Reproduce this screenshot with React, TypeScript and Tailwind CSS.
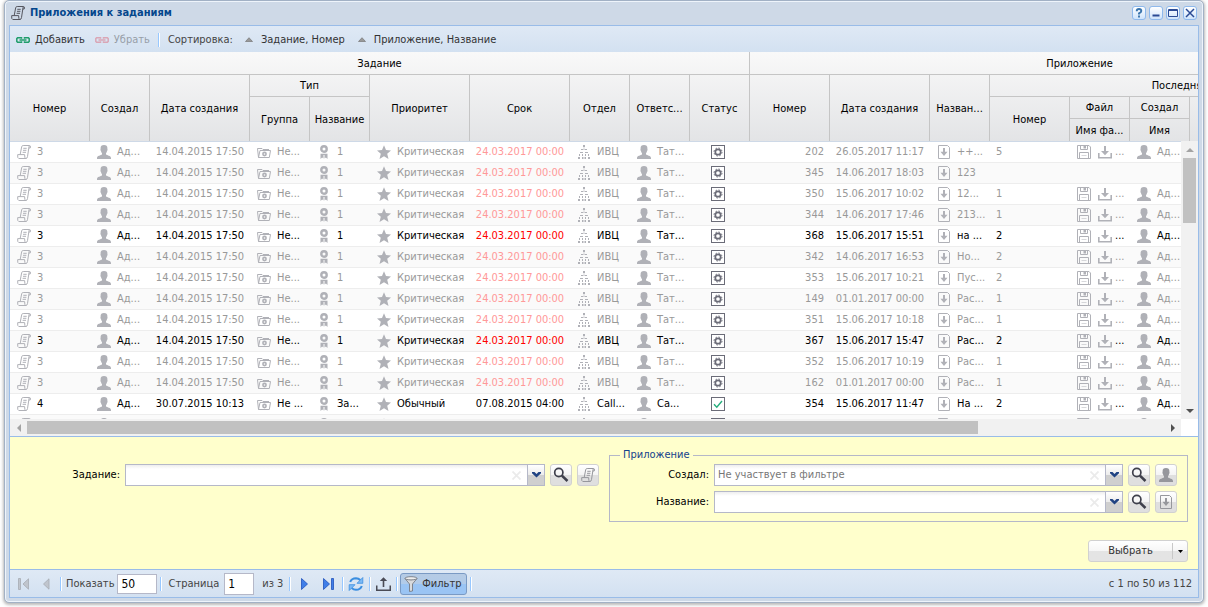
import type { ReactNode } from "react";

const svg = "block shrink-0";

function ScrollIcon({ className = "text-[#b0b1b7]" }: { className?: string }) {
  return (
    <svg className={`${svg} ${className}`} width="14" height="14" viewBox="0 0 14 14" fill="none" stroke="currentColor">
      <path d="M3.200 9.500 4.700 1.700Q5 .5 6.200.5h6.100q1.400.1 1.100 1.500L13.200 3h-1.400L10.500 11.600Q10.200 13.400 9 13.500H1.800Q.3 13.300.7 9.600H7.600q-.1 3.700 1.300 3.900M11.800 3 12.300.6" />
      <path d="M6.300 3.300h3.400M6 5.300h3.400M5.600 7.300H9" />
    </svg>
  );
}

function PersonIcon({ className = "text-[#b0b1b7]" }: { className?: string }) {
  return (
    <svg className={`${svg} ${className}`} width="14" height="14" viewBox="0 0 14 14" fill="currentColor">
      <path d="M7 0c2.400 0 3.400 1.300 3.400 3 0 .6-.1 1 .1 1.400.3.500 0 1.100-.4 1.300-.2 1.200-.6 2-1.100 2.500v1.300c1.200 1 5 1 5 3.500v1H0v-1c0-2.500 3.800-2.500 5-3.500V8.200C4.500 7.700 4.100 6.900 3.900 5.700 3.500 5.500 3.200 4.900 3.500 4.400 3.700 4 3.600 3.600 3.600 3 3.600 1.300 4.600 0 7 0z" />
    </svg>
  );
}

function FolderIcon() {
  return (
    <svg className={`${svg} text-[#b0b1b7]`} width="14" height="14" viewBox="0 0 14 14" fill="none" stroke="currentColor">
      <path d="M1.500 12.500.5 3.500h4.500l1 1h6M1.500 12.500 3 5.500h10.500l-1.200 7z" />
      <circle cx="7.500" cy="9" r="1.600" strokeWidth="1.600" />
    </svg>
  );
}

function AwardIcon() {
  return (
    <svg className={`${svg} text-[#b0b1b7]`} width="14" height="14" viewBox="0 0 14 14" fill="none" stroke="currentColor">
      <circle cx="7" cy="4" r="2.700" strokeWidth="2.400" />
      <path d="M3.500 8.800h7V14L8.900 12.400 7.500 13.500V10h-1v3.500L5.100 12.400 3.500 14z" fill="currentColor" stroke="none" />
    </svg>
  );
}

function StarIcon() {
  return (
    <svg className={`${svg} text-[#b0b1b7]`} width="14" height="14" viewBox="0 0 14 14" fill="currentColor">
      <path d="M7 .2 9 5.100l5 .400-3.800 3.300L11.500 13.900 7 11.200 2.500 13.900 3.800 8.800 0 5.500l5-.4z" />
    </svg>
  );
}

function TreeIcon() {
  return (
    <svg className={`${svg} text-[#b0b1b7]`} width="14" height="14" viewBox="0 0 14 14" fill="currentColor">
      <path d="M6 0h2v2H6zM6.500 2.500h1v1h-1zM4 4h2v1H4zM6.500 4h1v1h-1zM8 4h2v1H8zM3 7h3v1H3zM8 7h3v1H8zM2 9h1v2H2zM5 9h1v2H5zM8 9h1v2H8zM11 9h1v2h-1zM1 12h2v2H1zM5 12h1.500v2H5zM7.500 12H9v2H7.500zM11 12h2v2h-2z" />
    </svg>
  );
}

function FileIcon({ className = "text-[#b0b1b7]" }: { className?: string }) {
  return (
    <svg className={`${svg} ${className}`} width="14" height="14" viewBox="0 0 14 14" fill="none" stroke="currentColor">
      <path d="M1.500.5h9l2 2v11h-11z" />
      <path d="M7 3v5" strokeWidth="2" />
      <path d="M3.500 6.700h7L7 11z" fill="currentColor" stroke="none" />
    </svg>
  );
}

function FloppyIcon() {
  return (
    <svg className={`${svg} text-[#b0b1b7]`} width="14" height="14" viewBox="0 0 14 14" fill="none" stroke="currentColor">
      <path d="M.5.500h11.500l1.500 1.500v11.500H.5zM3.500.500v4h7v-4M2.500 13.500v-6h9v6" />
      <path d="M4.500 10.500h5" strokeOpacity=".5" />
      <path d="M6.500 0h2.500v3.500H6.500z" fill="currentColor" stroke="none" />
    </svg>
  );
}

function DownloadIcon() {
  return (
    <svg className={`${svg} text-[#b0b1b7]`} width="14" height="14" viewBox="0 0 14 14" fill="currentColor">
      <path d="M6 1h2v5h3L7 10.300 3 6h3zM0 8h1.600v3.900h10.800V8H14v5.500H0z" />
    </svg>
  );
}

function StatusIcon({ done }: { done?: boolean }) {
  return (
    <svg className={`${svg} text-[#6b6c78]`} width="14" height="14" viewBox="0 0 14 14" fill="none" stroke="currentColor" role="img" aria-label={done ? "Выполнено" : "В работе"}>
      <rect x=".5" y=".5" width="13" height="13" fill="#fff" />
      {done ? (
        <path d="M3 7.200 5.800 10.200 11 4" stroke="#27ae7e" strokeWidth="1.400" />
      ) : (
        <>
          <circle cx="7" cy="7" r="2.700" strokeWidth="1.700" />
          <circle cx="7" cy="7" r="4" strokeWidth="1" strokeDasharray="1.570 1.570" />
        </>
      )}
    </svg>
  );
}

function LinkIcon({ className }: { className: string }) {
  return (
    <svg className={`${svg} ${className}`} width="14" height="6" viewBox="0 0 14 6" fill="none" stroke="currentColor" strokeWidth="1.500">
      <path d="M5.500 1.700V.8H1.600L.8 1.600v2.800l.8.800h3.900V4.300M8.500 1.700V.8h3.900l.8.800v2.800l-.8.800H8.500V4.300M3.500 3h7" />
    </svg>
  );
}

function SearchIcon() {
  return (
    <svg className={svg} width="16" height="16" viewBox="0 0 16 16" fill="none" stroke="#3f404c">
      <circle cx="5.800" cy="5.500" r="4.100" strokeWidth="1.700" />
      <path d="M8.900 8.600 14.500 14" strokeWidth="2.600" />
    </svg>
  );
}

const cols = [80, 60, 100, 60, 60, 100, 100, 60, 60, 60, 80, 100, 60, 80, 60, 60, 220];

function Cols() {
  return (
    <colgroup>
      {cols.map((w, i) => (
        <col key={i} style={{ width: w }} />
      ))}
    </colgroup>
  );
}

function Th({ children, c = 1, r = 1, line = true }: { children?: ReactNode; c?: number; r?: number; line?: boolean }) {
  return (
    <th colSpan={c} rowSpan={r} className={`overflow-hidden whitespace-nowrap border-r border-[#c5c5c5] p-0 pt-px text-center align-middle font-normal ${line ? "border-b" : ""}`}>
      {children}
    </th>
  );
}

interface Row {
  no?: string;
  active?: boolean;
  author?: string;
  date?: string;
  group?: string;
  kind?: string;
  prio?: string;
  due?: string;
  dept?: string;
  resp?: string;
  done?: boolean;
  file?: boolean;
  app?: string;
  appDate?: string;
  name?: string;
  ver?: string;
}

const base: Row = {
  no: "3", author: "Ад...", date: "14.04.2015 17:50", group: "Не...", kind: "1", prio: "Критическая",
  due: "24.03.2017 00:00", dept: "ИВЦ", resp: "Тат...", file: true,
};

const rows: Row[] = [
  { ...base, app: "202", appDate: "26.05.2017 11:17", name: "++...", ver: "5" },
  { ...base, app: "345", appDate: "14.06.2017 18:03", name: "123", file: false },
  { ...base, app: "350", appDate: "15.06.2017 10:02", name: "12...", ver: "1" },
  { ...base, app: "344", appDate: "14.06.2017 17:46", name: "213...", ver: "1" },
  { ...base, app: "368", appDate: "15.06.2017 15:51", name: "на ...", ver: "2", active: true },
  { ...base, app: "342", appDate: "14.06.2017 16:53", name: "Но...", ver: "2" },
  { ...base, app: "353", appDate: "15.06.2017 10:21", name: "Пус...", ver: "2" },
  { ...base, app: "149", appDate: "01.01.2017 00:00", name: "Рас...", ver: "1" },
  { ...base, app: "351", appDate: "15.06.2017 10:18", name: "Рас...", ver: "1" },
  { ...base, app: "367", appDate: "15.06.2017 15:47", name: "Рас...", ver: "2", active: true },
  { ...base, app: "352", appDate: "15.06.2017 10:19", name: "Рас...", ver: "1" },
  { ...base, app: "162", appDate: "01.01.2017 00:00", name: "Рас...", ver: "1" },
  {
    ...base, no: "4", app: "354", appDate: "15.06.2017 11:47", name: "На ...", ver: "2", active: true, done: true,
    date: "30.07.2015 10:13", group: "Не ...", kind: "За...", prio: "Обычный", due: "07.08.2015 04:00", dept: "Call...", resp: "Са...",
  },
  { file: true },
];

const line = "border-b border-[#ededed] p-0";

function IconCell({ icon, children }: { icon: ReactNode; children?: ReactNode }) {
  return (
    <td className={line}>
      <div className="flex items-center gap-1.5 overflow-hidden whitespace-nowrap pl-[7px]">
        {icon}
        {children && <span>{children}</span>}
      </div>
    </td>
  );
}

function GridRow({ row, odd }: { row: Row; odd: boolean }) {
  return (
    <tr className={`h-[21px] ${odd ? "bg-[#fafafa]" : "bg-white"} ${row.active ? "text-black" : "text-[#999]"}`}>
      <IconCell icon={<ScrollIcon />}>{row.no}</IconCell>
      <IconCell icon={<PersonIcon />}>{row.author}</IconCell>
      <td className={`whitespace-nowrap text-center ${line}`}>{row.date}</td>
      <IconCell icon={<FolderIcon />}>{row.group}</IconCell>
      <IconCell icon={<AwardIcon />}>{row.kind}</IconCell>
      <IconCell icon={<StarIcon />}>{row.prio}</IconCell>
      <td className={`whitespace-nowrap text-center ${line} ${row.done ? "" : row.active ? "text-[#f00]" : "text-[#f99]"}`}>{row.due}</td>
      <IconCell icon={<TreeIcon />}>{row.dept}</IconCell>
      <IconCell icon={<PersonIcon />}>{row.resp}</IconCell>
      <td className={line}>
        <div className="pl-[21px]"><StatusIcon done={row.done} /></div>
      </td>
      <td className={`text-right ${line}`}>
        <span className="pr-1.5">{row.app}</span>
      </td>
      <td className={`whitespace-nowrap text-center ${line}`}>{row.appDate}</td>
      <IconCell icon={<FileIcon />}>{row.name}</IconCell>
      <td className={line}>
        <span className="pl-1.5">{row.ver}</span>
      </td>
      {row.file ? (
        <>
          <td className={line}>
            <div className="flex items-center gap-[7px] pl-[7px]">
              <FloppyIcon />
              <DownloadIcon />
              {row.ver && <span className="-ml-1">...</span>}
            </div>
          </td>
          <IconCell icon={<PersonIcon />}>{row.author}</IconCell>
        </>
      ) : (
        <>
          <td className={line} />
          <td className={line} />
        </>
      )}
      <td className={line} />
    </tr>
  );
}

function Triangle({ d, className }: { d: string; className: string }) {
  return (
    <svg className={`${svg} ${className}`} width="8" height="8" viewBox="0 0 8 8" fill="currentColor">
      <path d={d} />
    </svg>
  );
}
const UP = "M0 6 4 2 8 6z";
const DOWN = "M0 2 4 6 8 2z";
const LEFT = "M6 0 2 4 6 8z";
const RIGHT = "M2 0 6 4 2 8z";

function Sep() {
  return <span className="h-3.5 w-0.5 shrink-0 border-l border-r border-l-[#98c8ff] border-r-white" />;
}

function SortArrow() {
  return (
    <svg className={svg} width="8" height="5" viewBox="0 0 8 5">
      <path d="M.5 4.500 4 .7 7.500 4.500z" fill="#999" stroke="#777" strokeWidth=".7" />
    </svg>
  );
}

function Tool({ label, children }: { label: string; children: ReactNode }) {
  return (
    <button aria-label={label} className="flex size-[14px] items-center justify-center rounded-[3px] border border-[#8fb9ec] bg-linear-to-b from-white to-[#cfe4fb]">
      <svg width="12" height="12" viewBox="0 0 12 12" className={svg} fill="none" stroke="#2b4a94">
        {children}
      </svg>
    </button>
  );
}

const smallButton = "flex size-[22px] shrink-0 items-center justify-center rounded-[3px] border border-[#d1d1d1] bg-linear-to-b from-white from-0% via-[#f4f4f4] via-50% to-[#dfdfdf] to-50%";

function FilterField({ id, label, labelClass, placeholder, icon, iconLabel }: { id: string; label: string; labelClass: string; placeholder?: string; icon: ReactNode; iconLabel: string }) {
  return (
    <div className="flex h-[22px] items-center">
      <label htmlFor={id} className={`mr-[5px] shrink-0 whitespace-nowrap text-right ${labelClass}`}>{label}</label>
      <div className="flex h-full min-w-0 flex-1 border border-[#b5b8c8] bg-linear-to-b from-[#eee] to-white to-20%">
        <input id={id} placeholder={placeholder} className="min-w-0 flex-1 bg-transparent px-[3px] text-black outline-none placeholder:text-[#777]" />
        <button type="button" aria-label="Очистить" className="flex w-[22px] items-center justify-center">
          <svg width="9" height="9" viewBox="0 0 9 9" stroke="#ebebeb" strokeWidth="1.800" className={svg}>
            <path d="M.5.500l8 8M8.500.500l-8 8" />
          </svg>
        </button>
        <button type="button" aria-label="Открыть список" className="flex w-[17px] items-center justify-center border-l border-[#b5b8c8] bg-linear-to-b from-white from-0% via-[#ececec] via-50% to-[#cfcfcf] to-50%">
          <svg width="9" height="6" viewBox="0 0 9 6" className={svg}>
            <path d="M0 0h2.500l2 2 2-2H9v1.200L4.500 5.500 0 1.200z" fill="#204383" />
          </svg>
        </button>
      </div>
      <button type="button" aria-label="Найти" className={`ml-[5px] ${smallButton}`}><SearchIcon /></button>
      <button type="button" aria-label={iconLabel} className={`ml-[5px] ${smallButton}`}>{icon}</button>
    </div>
  );
}

export default function App() {
  return (
    <div className='flex h-screen flex-col bg-white px-1 pb-1 font-["DejaVu_Sans_Condensed","DejaVu_Sans",sans-serif] text-[11px] leading-[14px] text-black'>
      <main className="flex min-h-0 flex-1 flex-col rounded-[5px] border border-[#a2b1c5] bg-[#ced9e7] px-1 pb-1 shadow-[0_1px_3px_1px_rgba(120,120,120,0.5),inset_0_0_0_1px_#eef4fb]">
        <header className="flex h-[24px] shrink-0 items-center gap-1 pl-0.5 pr-0.5">
          <ScrollIcon className="text-[#55565f]" />
          <h1 className="flex-1 pl-px font-bold text-[#04468c]">Приложения к заданиям</h1>
          <div className="flex gap-[3px]">
            <Tool label="Справка"><path d="M3.700 4.300Q3.700 2 6 2t2.300 2Q8.300 5.300 6 6.300V7.600M6 8.600v1.800" stroke="#3a74ac" strokeWidth="1.900" /></Tool>
            <Tool label="Свернуть"><path d="M2.500 8.500h7" strokeWidth="2" /></Tool>
            <Tool label="Развернуть"><path d="M1.500 2.500h9v7h-9zM1.500 3.500h9" /></Tool>
            <Tool label="Закрыть"><path d="M2 2l8 8M10 2l-8 8" strokeWidth="1.500" /></Tool>
          </div>
        </header>

        <div className="flex min-h-0 flex-1 flex-col border border-[#99bce8]">
          <div className="flex h-[26px] shrink-0 items-center bg-linear-to-b from-[#dfe9f5] to-[#d3e1f1] pl-1.5 pt-px text-[#333]">
            <button className="flex items-center gap-[5px]"><LinkIcon className="text-[#1f9d6b]" />Добавить</button>
            <button disabled className="ml-2.5 flex items-center gap-[5px] text-[#333] opacity-40"><LinkIcon className="text-[#dc4a5c]" />Убрать</button>
            <span className="ml-2 flex"><Sep /></span>
            <span className="ml-2 text-[#444]">Сортировка:</span>
            <button className="ml-3 flex items-center gap-2"><SortArrow />Задание, Номер</button>
            <button className="ml-[13px] flex items-center gap-2"><SortArrow />Приложение, Название</button>
          </div>

          <div className="shrink-0 overflow-hidden bg-linear-to-b from-[#f9f9f9] to-[#e3e4e6]">
            <table className="w-[1400px] table-fixed border-separate border-spacing-0">
              <Cols />
              <thead>
                <tr className="h-[23px]">
                  <Th c={10}>Задание</Th>
                  <Th c={7}>Приложение</Th>
                </tr>
                <tr className="h-[22px]">
                  <Th r={3} line={false}>Номер</Th>
                  <Th r={3} line={false}>Создал</Th>
                  <Th r={3} line={false}>Дата создания</Th>
                  <Th c={2}>Тип</Th>
                  <Th r={3} line={false}>Приоритет</Th>
                  <Th r={3} line={false}>Срок</Th>
                  <Th r={3} line={false}>Отдел</Th>
                  <Th r={3} line={false}>Ответс...</Th>
                  <Th r={3} line={false}>Статус</Th>
                  <Th r={3} line={false}>Номер</Th>
                  <Th r={3} line={false}>Дата создания</Th>
                  <Th r={3} line={false}>Назван...</Th>
                  <Th c={4}>Последняя версия</Th>
                </tr>
                <tr className="h-[22px]">
                  <Th r={2} line={false}>Группа</Th>
                  <Th r={2} line={false}>Название</Th>
                  <Th r={2} line={false}>Номер</Th>
                  <Th>Файл</Th>
                  <Th>Создал</Th>
                  <Th r={2} line={false} />
                </tr>
                <tr className="h-[22px]">
                  <Th line={false}>Имя фа...</Th>
                  <Th line={false}>Имя</Th>
                </tr>
              </thead>
            </table>
          </div>

          <div className="flex min-h-0 flex-1">
            <div className="min-w-0 flex-1 overflow-hidden pt-px">
              <table className="w-[1400px] table-fixed border-separate border-spacing-0">
                <Cols />
                <tbody>
                  {rows.map((r, i) => (
                    <GridRow key={i} row={r} odd={i % 2 === 1} />
                  ))}
                </tbody>
              </table>
            </div>
            <div className="flex w-[17px] shrink-0 flex-col items-center bg-[#f1f1f1]">
              <span className="flex h-[17px] items-center"><Triangle d={UP} className="text-[#a3a3a3]" /></span>
              <span className="h-[65px] w-[13px] bg-[#c1c1c1]" />
              <span className="flex-1" />
              <span className="flex h-[17px] items-center"><Triangle d={DOWN} className="text-[#505050]" /></span>
            </div>
          </div>
          <div className="flex h-[17px] shrink-0 items-center bg-white">
            <div className="flex h-full flex-1 items-center bg-[#f1f1f1]">
              <span className="flex w-[17px] justify-center"><Triangle d={LEFT} className="text-[#a3a3a3]" /></span>
              <span className="flex flex-1"><span className="h-[13px] w-[951px] bg-[#c1c1c1]" /></span>
              <span className="flex w-[17px] justify-center"><Triangle d={RIGHT} className="text-[#505050]" /></span>
            </div>
            <span className="w-[17px]" />
          </div>

          <form className="shrink-0 border-t border-[#99bce8] bg-[#ffffcc]" onSubmit={(e) => e.preventDefault()}>
            <div className="grid grid-cols-2 pt-[11px]">
              <div className="pl-2 pr-[5px] pt-4">
                <FilterField id="task" label="Задание:" labelClass="w-[102px]" icon={<ScrollIcon className="text-[#96979c]" />} iconLabel="Открыть задание" />
              </div>
              <div className="pl-[5px] pr-2.5">
                <fieldset className="min-w-0 border border-[#b5b8c8] px-2.5 pb-2">
                  <legend className="px-[3px] text-[#15428b]">Приложение</legend>
                  <div className="flex flex-col gap-[5px] pt-0.5">
                    <FilterField id="author" label="Создал:" labelClass="w-[89px]" placeholder="Не участвует в фильтре" icon={<PersonIcon className="text-[#96979c]" />} iconLabel="Открыть автора" />
                    <FilterField id="title" label="Название:" labelClass="w-[89px]" icon={<FileIcon className="text-[#96979c]" />} iconLabel="Открыть приложение" />
                  </div>
                </fieldset>
              </div>
            </div>
            <div className="flex justify-end pb-[7px] pr-2.5 pt-[18px]">
              <div className="flex h-[22px] w-[100px] items-center rounded-[3px] border border-[#d1d1d1] bg-linear-to-b from-white from-0% via-[#f6f6f6] via-50% to-[#e4e4e4] to-50% text-[#333]">
                <button type="submit" className="flex-1">Выбрать</button>
                <button type="button" aria-label="Ещё" className="flex h-4 w-[15px] items-center justify-center border-l border-[#c8c8c8]">
                  <svg width="5" height="3" viewBox="0 0 5 3" className={svg}><path d="M0 0h5L2.500 3z" /></svg>
                </button>
              </div>
            </div>
          </form>

          <footer className="flex h-[28px] shrink-0 items-center border-t border-[#99bce8] bg-linear-to-b from-[#dfe9f5] to-[#d3e1f1] pl-2 pr-1.5 text-[#444]">
            <button disabled aria-label="Первая страница">
              <svg width="12" height="12" viewBox="0 0 12 12" className={svg}><path d="M.500.500h2v11h-2zM10.500.8v10.400L5 6z" fill="#c0c5cd" stroke="#a6abb3" strokeWidth=".8" /></svg>
            </button>
            <button disabled aria-label="Предыдущая страница" className="ml-3">
              <svg width="8" height="12" viewBox="0 0 8 12" className={svg}><path d="M7 .8v10.400L1.500 6z" fill="#c0c5cd" stroke="#a6abb3" strokeWidth=".8" /></svg>
            </button>
            <span className="ml-2.5 flex"><Sep /></span>
            <label htmlFor="size" className="ml-1">Показать</label>
            <input id="size" defaultValue="50" className="ml-[3px] h-5 w-10 border border-[#b5b8c8] bg-white px-[3px] text-xs text-black" />
            <span className="ml-[3px] flex"><Sep /></span>
            <label htmlFor="page" className="ml-1.5">Страница</label>
            <input id="page" defaultValue="1" className="ml-[5px] h-[22px] w-[30px] border border-[#b5b8c8] bg-white px-[3px] text-xs text-black" />
            <span className="ml-2">из 3</span>
            <span className="ml-1.5 flex"><Sep /></span>
            <button aria-label="Следующая страница" className="ml-2.5">
              <svg width="7" height="12" viewBox="0 0 7 12" className={svg}><path d="M.5.5v11L6.500 6z" fill="#3f7ee8" stroke="#1f52bb" strokeWidth=".8" /></svg>
            </button>
            <button aria-label="Последняя страница" className="ml-[15px]">
              <svg width="12" height="12" viewBox="0 0 12 12" className={svg}><path d="M.500.500v11L6.500 6zM8.500.500h2v11h-2z" fill="#3f7ee8" stroke="#1f52bb" strokeWidth=".8" /></svg>
            </button>
            <span className="ml-[7px] flex"><Sep /></span>
            <button aria-label="Обновить" className="ml-1">
              <svg width="16" height="16" viewBox="0 0 16 16" className={svg} fill="none" stroke="#3b8ee0" strokeWidth="2">
                <path d="M2.200 6Q3.500 2.300 8 2.200 10.500 2.200 12.300 4M13.800 10q-1.300 3.700-5.800 3.800-2.500 0-4.300-1.800" />
                <path d="M14.800 1.500V7.300H9zM1.200 14.500V8.700H7z" fill="#7dbaf5" strokeWidth=".8" />
              </svg>
            </button>
            <span className="ml-[5px] flex"><Sep /></span>
            <button aria-label="Выгрузить" className="ml-[5px]">
              <svg width="15" height="14" viewBox="0 0 15 14" className={svg} fill="#4a4b55"><path d="M6.700 10V4H3.800L7.500.200 11.200 4H8.300v6zM0 8.500h1.500v4h12v-4H15V14H0z" /></svg>
            </button>
            <span className="ml-[5px] flex"><Sep /></span>
            <button aria-pressed="true" className="ml-0.5 flex h-[22px] w-[67px] items-center gap-1 rounded-[3px] border border-[#7a9ac4] bg-linear-to-b from-[#b6cbe4] from-0% via-[#b1cbea] via-50% to-[#9ac4f4] to-50% pl-[3px] text-[#333]">
              <svg width="14" height="16" viewBox="0 0 14 16" className={svg}>
                <path d="M1 2.500Q7 5 13 2.500L8.500 8v7L5.500 15.500V8z" fill="#d8dadd" stroke="#777c84" strokeWidth=".9" />
                <ellipse cx="7" cy="2.300" rx="6" ry="1.600" fill="#eee" stroke="#777c84" strokeWidth=".9" />
              </svg>
              Фильтр
            </button>
            <span className="ml-[3px] flex"><Sep /></span>
            <span className="ml-auto">с 1 по 50 из 112</span>
          </footer>
        </div>
      </main>
    </div>
  );
}
